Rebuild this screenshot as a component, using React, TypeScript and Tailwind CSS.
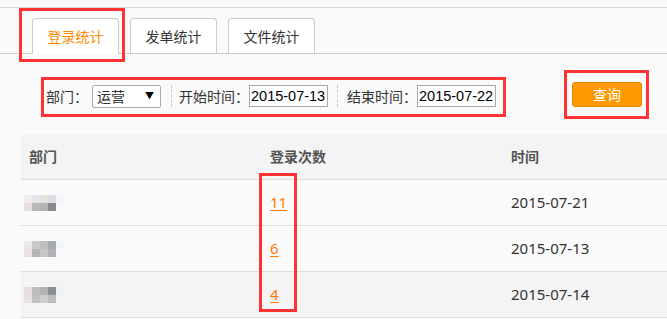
import React from "react";

const font = { fontFamily: '"Noto Sans", "Noto Sans CJK SC", sans-serif' };
const cjk = { fontFamily: '"Noto Sans CJK SC", sans-serif' };
const arial = { fontFamily: '"Liberation Sans", Arial, sans-serif' };

const tabs = ["登录统计", "发单统计", "文件统计"];

const rows = [
  {
    count: "11",
    date: "2015-07-21",
    blur: [
      ["#f0ecec", "#e5e6ea", "#e6e2de", "#dcdde0", "#f3f5f9"],
      ["#e8e0de", "#b9b9b9", "#b5b2b2", "#8a8a8e", "#f6f8fb"],
    ],
    bg: "bg-[#fafafa]",
  },
  {
    count: "6",
    date: "2015-07-13",
    blur: [
      ["#ece8e8", "#c9c9cb", "#c2bebc", "#a9aaae", "#f1f4f8"],
      ["#e8e2e0", "#b6b6b8", "#c7c5c8", "#b2b2b6", "#f8f9fb"],
    ],
    bg: "bg-[#fafafa]",
  },
  {
    count: "4",
    date: "2015-07-14",
    blur: [
      ["#e6dedc", "#bdbdbd", "#b6b2b0", "#8c8e92", "#eef1f6"],
      ["#e6e0de", "#c2c2c4", "#cfcdd0", "#bdbdc0", "#f3f4f6"],
    ],
    bg: "bg-[#f4f4f4]",
  },
];

const Blur: React.FC<{ grid: string[][] }> = ({ grid }) => (
  <div className="flex flex-col">
    {grid.map((line, i) => (
      <div key={i} className="flex">
        {line.map((c, j) => (
          <div key={j} className="w-[8px] h-[8px]" style={{ background: c }} />
        ))}
      </div>
    ))}
  </div>
);

export default function App() {
  return (
    <div className="relative w-[667px] h-[319px] overflow-hidden bg-[#fafafa] text-[#333]" style={font}>
      <div className="h-[7px]" />
      <div className="border-t border-[#d8d8d8]" />

      {/* tabs */}
      <div className="flex items-end gap-[11px] pl-[32px] pt-[10px] border-b border-[#cccccc] h-[46px]" style={cjk}>
        {tabs.map((t, i) => (
          <div key={t}
            className={`w-[87px] flex items-center justify-center border border-b-0 border-[#cccccc] rounded-t-[4px] bg-white text-[14px] ${
              i === 0 ? "h-[36px] -mb-px text-[#ff8a00] pb-px" : "h-[35px] text-[#333]"}`}>
            {t}
          </div>
        ))}
      </div>

      {/* filters */}
      <div className="flex items-center h-[50px] mt-[17px] pl-[46px] pr-[25px] text-[14px] text-[#333]">
        <span className="shrink-0 whitespace-nowrap mr-[4px]" style={cjk}>部门：</span>
        <div className="shrink-0 w-[69px] h-[23px] border border-[#aaaaaa] rounded-[2px] bg-white flex items-center justify-between pl-[4px] pr-[6px]" style={cjk}>
          <span>运营</span>
          <span className="text-[9px] text-black">▼</span>
        </div>
        <div className="ml-[10px] mr-[7px] h-[22px] border-l border-dashed border-[#cccccc]" />
        <span className="shrink-0 whitespace-nowrap" style={cjk}>开始时间：</span>
        <input readOnly value="2015-07-13"
          className="shrink-0 w-[79px] h-[22px] border border-[#aaaaaa] bg-white px-[1px] text-[14.5px] text-black outline-none"
          style={arial} />
        <div className="ml-[9px] mr-[9px] h-[22px] border-l border-dashed border-[#cccccc]" />
        <span className="shrink-0 whitespace-nowrap" style={cjk}>结束时间：</span>
        <input readOnly value="2015-07-22"
          className="shrink-0 w-[79px] h-[22px] border border-[#aaaaaa] bg-white px-[1px] text-[14.5px] text-black outline-none"
          style={arial} />
        <button className="ml-auto mb-[3px] w-[70px] h-[25px] rounded-[3px] bg-[#ff9900] border border-[#e88a00] text-white text-[14px]" style={cjk}>
          查询
        </button>
      </div>

      {/* table */}
      <div className="ml-[21px] mt-[13px] text-[14px]">
        <div className="grid grid-cols-[241px_241px_1fr] h-[46px] items-center bg-[#f4f4f4] border-b border-[#dddddd] text-[#555] font-semibold" style={cjk}>
          <div className="pl-[8px]">部门</div>
          <div className="pl-[8px]">登录次数</div>
          <div className="pl-[8px]">时间</div>
        </div>
        {rows.map((r, i) => (
          <div key={i} className={`grid grid-cols-[241px_241px_1fr] h-[46px] items-center border-b border-[#dddddd] ${r.bg}`}>
            <div className="pl-[3px]"><Blur grid={r.blur} /></div>
            <div className="pl-[8px]">
              <a className="text-[15px] text-[#ff7a00] underline underline-offset-2">{r.count}</a>
            </div>
            <div className="pl-[8px] text-[15px] text-[#333]">{r.date}</div>
          </div>
        ))}
      </div>

      {/* annotation boxes */}
      <div className="absolute left-[19px] top-[8px] w-[106px] h-[54px] border-[3px] border-[#ff3333]" />
      <div className="absolute left-[41px] top-[77px] w-[465px] h-[40px] border-[3px] border-[#ff3333]" />
      <div className="absolute left-[564px] top-[70px] w-[85px] h-[49px] border-[3px] border-[#ff3333]" />
      <div className="absolute left-[259px] top-[173px] w-[38px] h-[139px] border-[3px] border-[#ff3333]" />
    </div>
  );
}
